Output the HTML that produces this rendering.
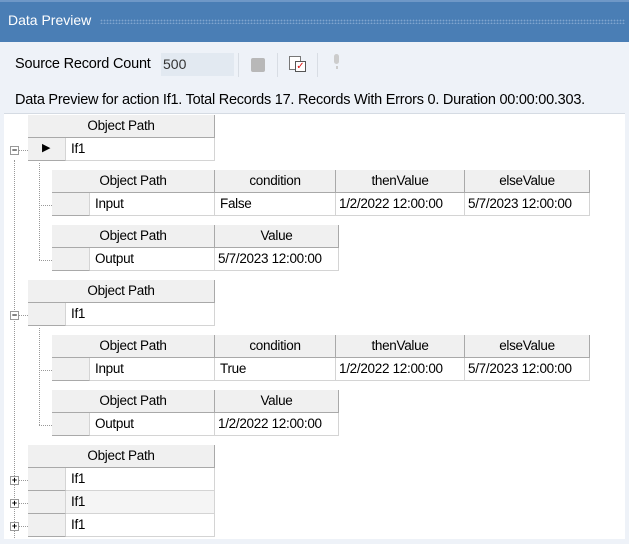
<!DOCTYPE html>
<html><head><style>
*{margin:0;padding:0;box-sizing:border-box}
body{width:629px;height:544px;background:#eef2f8;font-family:"Liberation Sans",sans-serif;position:relative;overflow:hidden;color:#000}
.a{position:absolute}
.title{left:0;top:0;width:629px;height:42px;background:#4a7eb5;border-top:2px solid #6f98c7}
.title span{position:absolute;left:8px;top:10px;color:#fff;font-size:14px}
.dots{position:absolute;left:100px;right:4px;top:17px;height:5px;background-image:radial-gradient(circle,#80a5cf 0.7px,transparent 1px);background-size:3px 3px}
.tree{left:4px;top:113px;width:621px;height:426px;background:#fff;border-top:1px solid #d5dbe3}
.h,.c,.r{position:absolute;font-size:13.5px;letter-spacing:-0.3px;line-height:21px;white-space:nowrap}
.h{background:#f0f0f0;border-right:1px solid #a9a9a9;border-bottom:1px solid #a9a9a9;text-align:center;height:23px}
.c{background:#fff;border-right:1px solid #d4d4d4;border-bottom:1px solid #d4d4d4;height:23px;padding-left:5px}
.r{background:#f0f0f0;border-right:1px solid #d4d4d4;border-bottom:1px solid #a9a9a9;height:23px}
.vl{position:absolute;border-left:1px dotted #999;width:0}
.hl{position:absolute;border-top:1px dotted #999;height:0}
.bx{position:absolute;width:9px;height:9px;border:1px solid #999;background:#fff;font-size:9px;line-height:7px;text-align:center;font-weight:bold;color:#000}
</style></head><body>
<div class="a title"><span>Data Preview</span><div class="dots"></div></div>
<div class="a" style="left:15px;top:56px;font-size:14.5px;letter-spacing:-0.2px">Source Record Count</div>
<div class="a" style="left:161px;top:53px;width:73px;height:23px;background:#e2e9f1;font-size:14px;padding:3px 2px;color:#333">500</div>
<div class="a" style="left:238px;top:53px;width:1px;height:24px;background:#d8dde4"></div>
<div class="a" style="left:251px;top:58px;width:14px;height:14px;background:#b8b8b8;border-radius:2px"></div>
<div class="a" style="left:277px;top:53px;width:1px;height:24px;background:#d8dde4"></div>
<div class="a" style="left:289px;top:56px;width:12px;height:14px;border:1px solid #777;background:#fff"></div>
<div class="a" style="left:295px;top:61px;width:11px;height:11px;border:1px solid #555;background:#fff;color:#d11;font-size:10px;line-height:9px;text-align:center">✓</div>
<div class="a" style="left:317px;top:53px;width:1px;height:24px;background:#d8dde4"></div>
<div class="a" style="left:334px;top:54px;width:5px;height:10px;background:#ccc;border-radius:3px"></div>
<div class="a" style="left:336px;top:66px;width:2px;height:3px;background:#ccc"></div>
<div class="a" style="left:15px;top:92px;font-size:14.5px;letter-spacing:-0.25px;white-space:nowrap">Data Preview for action If1. Total Records 17. Records With Errors 0. Duration 00:00:00.303.</div>
<div class="a tree"></div>

<div class="vl" style="left:14px;top:160px;height:378px"></div>
<div class="vl" style="left:39px;top:163px;height:97px"></div>
<div class="hl" style="left:39px;top:205px;width:13px"></div>
<div class="hl" style="left:39px;top:260px;width:13px"></div>
<div class="vl" style="left:39px;top:328px;height:97px"></div>
<div class="hl" style="left:39px;top:370px;width:13px"></div>
<div class="hl" style="left:39px;top:425px;width:13px"></div>
<div class="hl" style="left:14px;top:150px;width:14px"></div>
<div class="hl" style="left:14px;top:315px;width:14px"></div>
<div class="hl" style="left:14px;top:480px;width:14px"></div>
<div class="hl" style="left:14px;top:503px;width:14px"></div>
<div class="hl" style="left:14px;top:526px;width:14px"></div>
<div class="bx" style="left:10px;top:146px">−</div>
<div class="bx" style="left:10px;top:311px">−</div>
<div class="bx" style="left:10px;top:476px">+</div>
<div class="bx" style="left:10px;top:499px">+</div>
<div class="bx" style="left:10px;top:522px">+</div>

<div class="h" style="left:28px;top:115px;width:187px">Object Path</div>
<div class="r" style="left:28px;top:138px;width:38px"><span style="position:absolute;left:14px;top:0;font-size:11px">▶</span></div>
<div class="c" style="left:66px;top:138px;width:149px">If1</div>

<div class="h" style="left:52px;top:170px;width:163px">Object Path</div>
<div class="h" style="left:215px;top:170px;width:121px">condition</div>
<div class="h" style="left:336px;top:170px;width:129px">thenValue</div>
<div class="h" style="left:465px;top:170px;width:125px">elseValue</div>
<div class="r" style="left:52px;top:193px;width:38px"></div>
<div class="c" style="left:90px;top:193px;width:125px">Input</div>
<div class="c" style="left:215px;top:193px;width:121px">False</div>
<div class="c" style="left:336px;top:193px;width:129px;padding-left:3px">1/2/2022 12:00:00</div>
<div class="c" style="left:465px;top:193px;width:125px;padding-left:3px">5/7/2023 12:00:00</div>

<div class="h" style="left:52px;top:225px;width:163px">Object Path</div>
<div class="h" style="left:215px;top:225px;width:124px">Value</div>
<div class="r" style="left:52px;top:248px;width:38px"></div>
<div class="c" style="left:90px;top:248px;width:125px">Output</div>
<div class="c" style="left:215px;top:248px;width:124px;padding-left:3px">5/7/2023 12:00:00</div>

<div class="h" style="left:28px;top:280px;width:187px">Object Path</div>
<div class="r" style="left:28px;top:303px;width:38px"></div>
<div class="c" style="left:66px;top:303px;width:149px">If1</div>

<div class="h" style="left:52px;top:335px;width:163px">Object Path</div>
<div class="h" style="left:215px;top:335px;width:121px">condition</div>
<div class="h" style="left:336px;top:335px;width:129px">thenValue</div>
<div class="h" style="left:465px;top:335px;width:125px">elseValue</div>
<div class="r" style="left:52px;top:358px;width:38px"></div>
<div class="c" style="left:90px;top:358px;width:125px">Input</div>
<div class="c" style="left:215px;top:358px;width:121px">True</div>
<div class="c" style="left:336px;top:358px;width:129px;padding-left:3px">1/2/2022 12:00:00</div>
<div class="c" style="left:465px;top:358px;width:125px;padding-left:3px">5/7/2023 12:00:00</div>

<div class="h" style="left:52px;top:390px;width:163px">Object Path</div>
<div class="h" style="left:215px;top:390px;width:124px">Value</div>
<div class="r" style="left:52px;top:413px;width:38px"></div>
<div class="c" style="left:90px;top:413px;width:125px">Output</div>
<div class="c" style="left:215px;top:413px;width:124px;padding-left:3px">1/2/2022 12:00:00</div>

<div class="h" style="left:28px;top:445px;width:187px">Object Path</div>
<div class="r" style="left:28px;top:468px;width:38px"></div>
<div class="c" style="left:66px;top:468px;width:149px">If1</div>
<div class="r" style="left:28px;top:491px;width:38px"></div>
<div class="c" style="left:66px;top:491px;width:149px;background:#f5f5f5">If1</div>
<div class="r" style="left:28px;top:514px;width:38px"></div>
<div class="c" style="left:66px;top:514px;width:149px">If1</div>
</body></html>
